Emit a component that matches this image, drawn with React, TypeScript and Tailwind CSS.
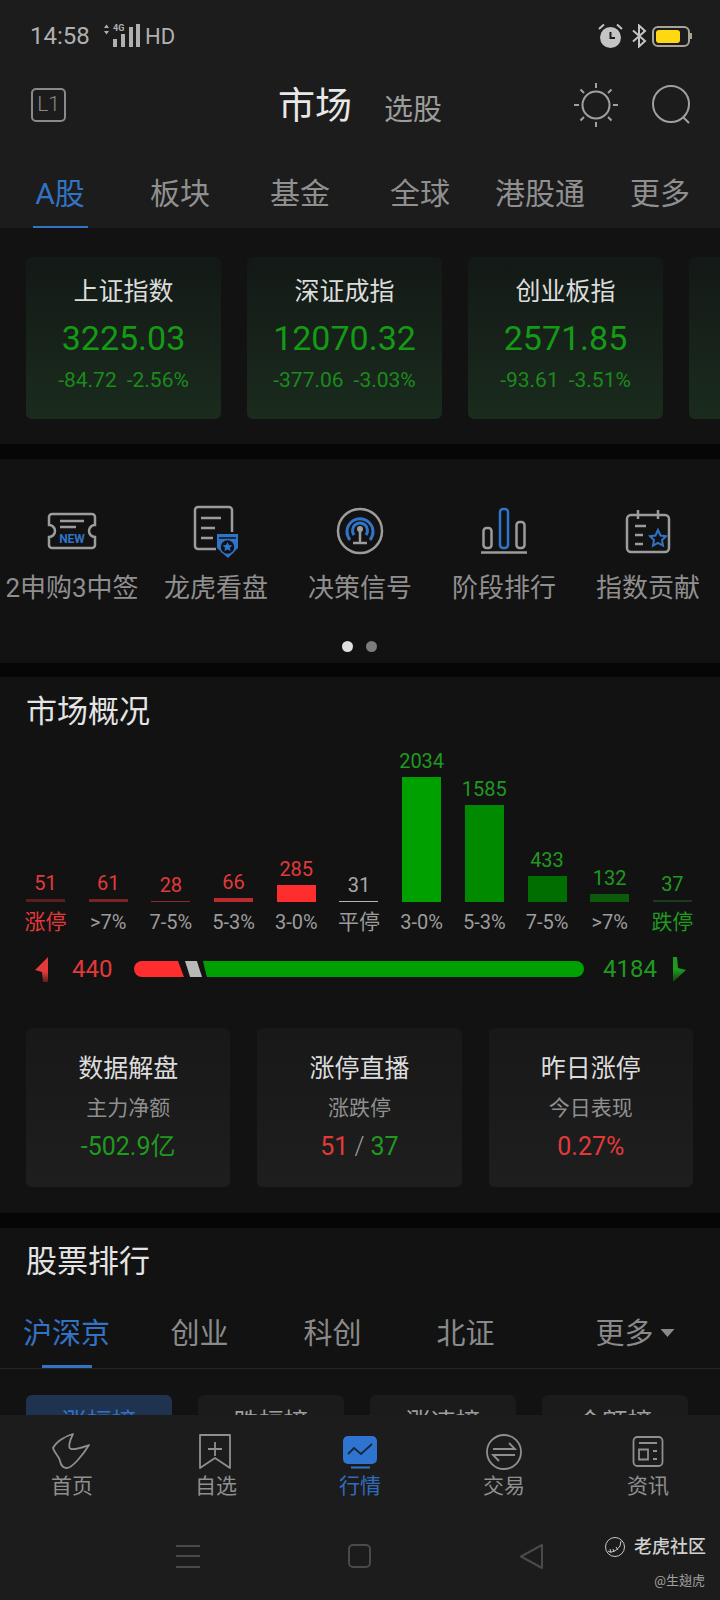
import React from 'react';

const gray = '#9c9c9c';
const blue = '#2f74c8';

const indexCards = [
  { name: '上证指数', value: '3225.03', diff: '-84.72', pct: '-2.56%' },
  { name: '深证成指', value: '12070.32', diff: '-377.06', pct: '-3.03%' },
  { name: '创业板指', value: '2571.85', diff: '-93.61', pct: '-3.51%' },
  { name: '', value: '', diff: '', pct: '' },
];

const bars = [
  { n: '51', label: '涨停', h: 3, bar: 'bg-[#5a1e1e]', text: 'text-[#e23a3a]', labelColor: 'text-[#e23a3a] text-[21px]' },
  { n: '61', label: '>7%', h: 3, bar: 'bg-[#7a2424]', text: 'text-[#e23a3a]', labelColor: 'text-[#9c9c9c] text-[20px]' },
  { n: '28', label: '7-5%', h: 1, bar: 'bg-[#8f2828]', text: 'text-[#e23a3a]', labelColor: 'text-[#9c9c9c] text-[20px]' },
  { n: '66', label: '5-3%', h: 4, bar: 'bg-[#bb2c2c]', text: 'text-[#e23a3a]', labelColor: 'text-[#9c9c9c] text-[20px]' },
  { n: '285', label: '3-0%', h: 17, bar: 'bg-[#ff2e2e]', text: 'text-[#e23a3a]', labelColor: 'text-[#9c9c9c] text-[20px]' },
  { n: '31', label: '平停', h: 1, bar: 'bg-[#b5b5b5]', text: 'text-[#a8a8a8]', labelColor: 'text-[#9c9c9c] text-[21px]' },
  { n: '2034', label: '3-0%', h: 125, bar: 'bg-[#00a000]', text: 'text-[#1f9a1f]', labelColor: 'text-[#9c9c9c] text-[20px]' },
  { n: '1585', label: '5-3%', h: 97, bar: 'bg-[#008a00]', text: 'text-[#1f9a1f]', labelColor: 'text-[#9c9c9c] text-[20px]' },
  { n: '433', label: '7-5%', h: 26, bar: 'bg-[#006e00]', text: 'text-[#1f9a1f]', labelColor: 'text-[#9c9c9c] text-[20px]' },
  { n: '132', label: '>7%', h: 8, bar: 'bg-[#0c5a0c]', text: 'text-[#1f9a1f]', labelColor: 'text-[#9c9c9c] text-[20px]' },
  { n: '37', label: '跌停', h: 2, bar: 'bg-[#1c3a1c]', text: 'text-[#1f9a1f]', labelColor: 'text-[#1f9a1f] text-[21px]' },
];

function TicketIcon() {
  return (
    <svg width="56" height="56" viewBox="0 0 56 56" fill="none">
      <path d="M8 12H48a3 3 0 0 1 3 3V23a6 6 0 0 0 0 12V43a3 3 0 0 1-3 3H8a3 3 0 0 1-3-3V35a6 6 0 0 0 0-12V15a3 3 0 0 1 3-3Z" stroke={gray} strokeWidth="2.5" />
      <path d="M16 19H40M16 25H32" stroke={gray} strokeWidth="2.5" />
      <text x="28" y="41" textAnchor="middle" fontSize="12" fontWeight="700" fill={blue} fontFamily="Roboto">NEW</text>
    </svg>
  );
}

function DocIcon() {
  return (
    <svg width="56" height="56" viewBox="0 0 56 56" fill="none">
      <path d="M28 47H10a3 3 0 0 1-3-3V8a3 3 0 0 1 3-3H41a3 3 0 0 1 3 3V30" stroke={gray} strokeWidth="2.5" />
      <path d="M13 16H33M13 26H27M13 36H25" stroke={gray} strokeWidth="2.5" />
      <path d="M29 32H50V46L40 56L29 46Z" fill={blue} />
      <path d="M31 36H48" stroke="#121212" strokeWidth="1.5" />
      <circle cx="39.500" cy="45" r="7.500" fill="#121212" stroke={blue} strokeWidth="1.5" />
      <path d="M39.500 40l1.500 3 3.300.4-2.400 2.300.6 3.300-3-1.600-3 1.600.6-3.300-2.400-2.300 3.300-.4Z" fill={blue} />
    </svg>
  );
}

function SignalIcon() {
  return (
    <svg width="56" height="56" viewBox="0 0 56 56" fill="none">
      <circle cx="28" cy="29" r="22" stroke={gray} strokeWidth="2.5" />
      <path d="M18 38a13 13 0 1 1 20 0" stroke={blue} strokeWidth="3" />
      <path d="M22 33a7.500 7.500 0 1 1 12 0" stroke={blue} strokeWidth="3" />
      <circle cx="28" cy="27" r="3" fill={gray} />
      <path d="M28 29V41M21 41H35" stroke={gray} strokeWidth="2.5" />
    </svg>
  );
}

function BarsIcon() {
  return (
    <svg width="56" height="56" viewBox="0 0 56 56" fill="none">
      <rect x="7.5" y="26" width="8" height="20" rx="3" stroke={gray} strokeWidth="2.5" />
      <rect x="24" y="7" width="8" height="39" rx="3" stroke={blue} strokeWidth="2.5" />
      <rect x="40.5" y="20" width="8" height="26" rx="3" stroke={gray} strokeWidth="2.5" />
      <path d="M5 50.5H51" stroke={gray} strokeWidth="2.5" />
    </svg>
  );
}

function CalendarIcon() {
  return (
    <svg width="56" height="56" viewBox="0 0 56 56" fill="none">
      <rect x="7" y="13" width="42" height="37" rx="4" stroke={gray} strokeWidth="2.5" />
      <path d="M18 8V17M38 8V17" stroke={gray} strokeWidth="2.5" />
      <path d="M15 24H26M15 33H23M15 42H23" stroke={gray} strokeWidth="2.5" />
      <path d="M38 28l2.500 5.500 5.500.7-4 3.900 1 5.600-5-2.800-5 2.800 1-5.600-4-3.900 5.500-.7Z" stroke={blue} strokeWidth="2" />
    </svg>
  );
}

const shortcuts = [
  { label: '2申购3中签', icon: <TicketIcon /> },
  { label: '龙虎看盘', icon: <DocIcon /> },
  { label: '决策信号', icon: <SignalIcon /> },
  { label: '阶段排行', icon: <BarsIcon /> },
  { label: '指数贡献', icon: <CalendarIcon /> },
];

function NavIcon({ name }: { name: string }) {
  if (name === 'home') {
    return (
      <svg width="44" height="44" viewBox="0 0 44 44" fill="none">
        <path d="M23 6C15 8 6 14 3 20C5 26 9 28 10 33C11 38 13 40 17 40C22 40 33 27 39 17C33 19 26 22 21 21C18 20 19 14 23 6Z" stroke="#8f8f8f" strokeWidth="1.8" strokeLinejoin="round" />
      </svg>
    );
  }
  if (name === 'star') {
    return (
      <svg width="44" height="44" viewBox="0 0 44 44" fill="none">
        <path d="M6 7H36V40L21 30L6 40Z" stroke="#8f8f8f" strokeWidth="1.8" strokeLinejoin="round" />
        <path d="M21 14V28M14 21H28" stroke="#8f8f8f" strokeWidth="1.8" />
      </svg>
    );
  }
  if (name === 'market') {
    return (
      <svg width="44" height="44" viewBox="0 0 44 44" fill="none">
        <rect x="5" y="8" width="34" height="28" rx="5" fill="#2f74d0" />
        <path d="M10 26L16 20L23 26L34 16" stroke="#16263c" strokeWidth="1.8" />
        <path d="M13 39.5H32" stroke="#2f74d0" strokeWidth="2" />
      </svg>
    );
  }
  if (name === 'trade') {
    return (
      <svg width="44" height="44" viewBox="0 0 44 44" fill="none">
        <circle cx="22" cy="24" r="17" stroke="#8f8f8f" strokeWidth="1.8" />
        <path d="M11 21H33L27 15M33 27H11L17 33" stroke="#8f8f8f" strokeWidth="1.8" />
      </svg>
    );
  }
  return (
    <svg width="44" height="44" viewBox="0 0 44 44" fill="none">
      <rect x="7.5" y="9" width="29" height="29" rx="4" stroke="#8f8f8f" strokeWidth="1.8" />
      <path d="M13 15H31M13 21.5H22V31.5H13ZM27 23H31M27 31H31" stroke="#8f8f8f" strokeWidth="1.8" />
    </svg>
  );
}

const navItems = [
  { label: '首页', icon: 'home' },
  { label: '自选', icon: 'star' },
  { label: '行情', icon: 'market', active: true },
  { label: '交易', icon: 'trade' },
  { label: '资讯', icon: 'news' },
];

export default function App() {
  return (
    <div className="w-[720px] h-[1600px] flex flex-col overflow-hidden bg-[#060606] font-['Roboto','Noto_Sans_CJK_SC',sans-serif]">
      <div className="flex-1 min-h-0 overflow-hidden">
        {/* top bar */}
        <div className="bg-[#1c1c1c]">
          <div className="h-[72px] flex items-center pl-[30px] pr-[28px] text-[#b0b0b0]">
            <span className="text-[24px] w-[71px]">14:58</span>
            <svg width="42" height="26" viewBox="0 0 42 26" fill="#b0b0b0">
              <path d="M3 5L5.500 1.500L8 5ZM3 8L5.500 11.500L8 8Z" />
              <text x="12" y="8" fontSize="9" fontWeight="700" fontFamily="Roboto">4G</text>
              <rect x="12" y="16" width="4" height="8" />
              <rect x="20" y="11" width="4" height="13" />
              <rect x="28" y="4" width="4" height="20" />
              <rect x="35" y="1" width="4" height="23" />
            </svg>
            <span className="text-[22px] ml-[2px]">HD</span>
            <div className="ml-auto flex items-center gap-[8px]">
              <svg width="25" height="26" viewBox="0 0 25 26" fill="none">
                <circle cx="12.500" cy="14.500" r="10.500" fill="#c4c4c4" />
                <path d="M12.500 9V15H17" stroke="#1c1c1c" strokeWidth="2" />
                <path d="M1 6L6 1.500M24 6L19 1.500" stroke="#c4c4c4" strokeWidth="2" />
              </svg>
              <svg width="16" height="24" viewBox="0 0 16 24" fill="none">
                <path d="M2 6.500L14 17L8 22.500V1.500L14 7L2 17.500" stroke="#c4c4c4" strokeWidth="2" />
              </svg>
              <div className="ml-[-3px] flex items-center">
                <div className="w-[38px] h-[21px] border-2 border-[#a8a498] rounded-[6px] p-[2px]">
                  <div className="w-[24px] h-full bg-[#ffd814] rounded-[3px]" />
                </div>
                <div className="w-[2px] h-[6px] bg-[#a8a498]" />
              </div>
            </div>
          </div>
          <div className="h-[66px] flex items-center pl-[31px] pr-[28px]">
            <div className="w-[35px] h-[34px] border-2 border-[#8a8a8a] rounded-[5px] flex items-center justify-center text-[#8a8a8a] text-[21px] font-light">L1</div>
            <span className="ml-[212px] mt-[3px] text-[37px] text-[#e8e8e8] w-[74px] leading-[48px]">市场</span>
            <span className="ml-[32px] mt-[9px] text-[29px] text-[#9c9c9c] leading-[40px]">选股</span>
            <svg className="ml-auto" width="48" height="48" viewBox="0 0 48 48" fill="none" stroke="#a0a0a0" strokeWidth="2">
              <circle cx="24" cy="24" r="13.500" />
              <path d="M24 2V7M24 41V46M2 24H7M41 24H46M8.500 8.500L12 12M36 36L39.500 39.500M39.500 8.500L36 12M12 36L8.500 39.500" />
            </svg>
            <svg className="ml-[30px] mr-[-2px]" width="44" height="44" viewBox="0 0 44 44" fill="none" stroke="#a0a0a0" strokeWidth="2">
              <circle cx="21" cy="21" r="18" />
              <path d="M33 34L39 40" />
            </svg>
          </div>
          <div className="h-[90px] flex">
            {['A股', '板块', '基金', '全球', '港股通', '更多'].map((t, i) => (
              <div key={t} className="w-[120px] flex flex-col items-center justify-end">
                <span className={`text-[30px] leading-[38px] ${i === 0 ? 'text-[#3273c4]' : 'text-[#909090]'}`}>{t}</span>
                <div className={`w-[55px] h-[2px] mt-[13px] ${i === 0 ? 'bg-[#3273c4]' : ''}`} />
              </div>
            ))}
          </div>
        </div>

        {/* index cards */}
        <div className="h-[216px] bg-[#121212] pt-[29px] pl-[26px] flex gap-[26px] overflow-hidden">
          {indexCards.map((c, i) => (
            <div key={i} className="w-[195px] h-[162px] shrink-0 rounded-[6px] bg-gradient-to-b from-[#131916] to-[#1a2b1d] flex flex-col items-center pt-[18px]">
              {c.name && (
                <>
                  <span className="text-[25px] leading-[34px] text-[#dcdcdc]">{c.name}</span>
                  <span className="text-[34px] leading-[40px] mt-[9px] text-[#149a14]">{c.value}</span>
                  <div className="flex gap-[10px] text-[21px] leading-[28px] mt-[8px] text-[#1c8a1c]">
                    <span>{c.diff}</span>
                    <span>{c.pct}</span>
                  </div>
                </>
              )}
            </div>
          ))}
        </div>

        {/* shortcuts */}
        <div className="mt-[15px] h-[204px] bg-[#121212] pt-[43px]">
          <div className="flex">
            {shortcuts.map(s => (
              <div key={s.label} className="w-[144px] flex flex-col items-center">
                {s.icon}
                <span className="mt-[13px] text-[26px] leading-[34px] text-[#8f8f8f] whitespace-nowrap">{s.label}</span>
              </div>
            ))}
          </div>
          <div className="mt-[36px] flex justify-center gap-[13px] pr-[2px]">
            <div className="w-[11px] h-[11px] rounded-full bg-[#e0e0e0]" />
            <div className="w-[11px] h-[11px] rounded-full bg-[#7c7c7c]" />
          </div>
        </div>

        {/* market overview */}
        <div className="mt-[14px] h-[536px] bg-[#121212] pt-[15px]">
          <div className="pl-[26px] text-[31px] leading-[40px] text-[#e4e4e4]">市场概况</div>
          <div className="pl-[26px] pr-[28px] flex justify-between">
            {bars.map((b, i) => (
              <div key={i} className="w-[39px] flex flex-col items-center">
                <div className="h-[170px] flex flex-col justify-end items-center w-full">
                  <span className={`text-[20px] leading-[24px] mb-[4px] ${b.text}`}>{b.n}</span>
                  <div className={`w-full ${b.bar}`} style={{ height: b.h }} />
                </div>
                <span className={`mt-[6px] leading-[28px] whitespace-nowrap ${b.labelColor}`}>{b.label}</span>
              </div>
            ))}
          </div>
          <div className="mt-[21px] h-[24px] flex items-center pl-[35px]">
            <svg width="14" height="25" viewBox="0 0 14 25">
              <defs>
                <linearGradient id="upArrow" x1="0" y1="0" x2="0" y2="1">
                  <stop offset="0.6" stopColor="#e23a3a" />
                  <stop offset="1" stopColor="#5a1e1e" />
                </linearGradient>
              </defs>
              <path d="M13 0V25H8L7 15L0 13Z" fill="url(#upArrow)" />
            </svg>
            <span className="ml-[23px] w-[62px] text-[24px] text-[#e23a3a]">440</span>
            <div className="w-[50px] h-[16px] bg-[#ff2e2e] rounded-l-full [clip-path:polygon(0_0,88%_0,100%_100%,0_100%)]" />
            <div className="ml-[1px] w-[17px] h-[16px] bg-[#b8b8b8] [clip-path:polygon(0_0,70%_0,100%_100%,30%_100%)]" />
            <div className="ml-[1px] w-[381px] h-[16px] bg-[#00a000] rounded-r-full [clip-path:polygon(0_0,100%_0,100%_100%,1%_100%)]" />
            <span className="ml-[19px] w-[69px] text-[24px] text-[#1f9a1f]">4184</span>
            <svg width="14" height="25" viewBox="0 0 14 25">
              <defs>
                <linearGradient id="downArrow" x1="0" y1="0" x2="0" y2="1">
                  <stop offset="0.5" stopColor="#1f9a1f" />
                  <stop offset="1" stopColor="#123c12" />
                </linearGradient>
              </defs>
              <path d="M1 0H5L6 11L14 13L1 25Z" fill="url(#downArrow)" />
            </svg>
          </div>
          <div className="mt-[47px] pl-[26px] pr-[27px] grid grid-cols-3 gap-[27px]">
            <div className="h-[159px] rounded-[6px] bg-gradient-to-b from-[#181818] to-[#1e1e1e] flex flex-col items-center pt-[24px]">
              <span className="text-[25px] leading-[34px] text-[#dcdcdc]">数据解盘</span>
              <span className="mt-[7px] text-[21px] leading-[30px] text-[#8f8f8f]">主力净额</span>
              <span className="mt-[7px] text-[25px] leading-[34px] text-[#1f9a1f]">-502.9亿</span>
            </div>
            <div className="h-[159px] rounded-[6px] bg-gradient-to-b from-[#181818] to-[#1e1e1e] flex flex-col items-center pt-[24px]">
              <span className="text-[25px] leading-[34px] text-[#dcdcdc]">涨停直播</span>
              <span className="mt-[7px] text-[21px] leading-[30px] text-[#8f8f8f]">涨跌停</span>
              <span className="mt-[7px] text-[25px] leading-[34px]">
                <span className="text-[#e23a3a]">51</span>
                <span className="text-[#9c9c9c] font-light"> / </span>
                <span className="text-[#1f9a1f]">37</span>
              </span>
            </div>
            <div className="h-[159px] rounded-[6px] bg-gradient-to-b from-[#181818] to-[#1e1e1e] flex flex-col items-center pt-[24px]">
              <span className="text-[25px] leading-[34px] text-[#dcdcdc]">昨日涨停</span>
              <span className="mt-[7px] text-[21px] leading-[30px] text-[#8f8f8f]">今日表现</span>
              <span className="mt-[7px] text-[25px] leading-[34px] text-[#e23a3a]">0.27%</span>
            </div>
          </div>
        </div>

        {/* stock ranking */}
        <div className="mt-[15px] bg-[#121212] pt-[14px] h-[300px]">
          <div className="pl-[26px] text-[31px] leading-[40px] text-[#e4e4e4]">股票排行</div>
          <div className="h-[87px] flex border-b border-[#262626]">
            {['沪深京', '创业', '科创', '北证'].map((t, i) => (
              <div key={t} className="w-[133px] flex flex-col items-center pt-[33px]">
                <span className={`text-[29px] leading-[38px] ${i === 0 ? 'text-[#3273c4]' : 'text-[#8a8a8a]'}`}>{t}</span>
                {i === 0 && <div className="w-[50px] h-[3px] mt-[12px] bg-[#3273c4]" />}
              </div>
            ))}
            <div className="flex-1 flex items-start justify-center pl-[18px] pt-[33px]">
              <span className="text-[29px] leading-[38px] text-[#8a8a8a]">更多</span>
              <div className="ml-[7px] mt-[14px] w-[14px] h-[8px] bg-[#8a8a8a] [clip-path:polygon(0_0,100%_0,50%_100%)]" />
            </div>
          </div>
          <div className="mt-[26px] pl-[26px] pr-[32px] flex justify-between">
            {['涨幅榜', '跌幅榜', '涨速榜', '金额榜'].map((t, i) => (
              <div key={t} className={`w-[146px] h-[56px] rounded-[6px] flex items-center justify-center text-[25px] ${i === 0 ? 'bg-[#1f3350] text-[#3273c4]' : 'bg-[#1b1b1b] text-[#a0a0a0]'}`}>{t}</div>
            ))}
          </div>
        </div>
      </div>

      {/* bottom nav */}
      <div className="h-[185px] shrink-0 bg-[#1c1c1c]">
        <div className="flex pt-[13px]">
          {navItems.map(n => (
            <div key={n.label} className="w-[144px] flex flex-col items-center">
              <NavIcon name={n.icon} />
              <span className={`text-[21px] leading-[28px] ${n.active ? 'text-[#2f6cbc]' : 'text-[#8f8f8f]'}`}>{n.label}</span>
            </div>
          ))}
        </div>
        <div className="relative mt-[32px] h-[48px] flex items-center pl-[176px]">
          <div className="w-[24px] h-[23px] flex flex-col justify-between">
            <div className="h-[2px] bg-[#4a4a4a]" />
            <div className="h-[2px] bg-[#4a4a4a]" />
            <div className="h-[2px] bg-[#4a4a4a]" />
          </div>
          <div className="ml-[148px] w-[23px] h-[24px] rounded-[5px] border-2 border-[#4a4a4a]" />
          <svg className="ml-[148px]" width="25" height="27" viewBox="0 0 25 27" fill="none">
            <path d="M23 2V25L2 13.500Z" stroke="#4a4a4a" strokeWidth="2" strokeLinejoin="round" />
          </svg>
          <div className="absolute left-[605px] top-[3px] flex items-center gap-[9px]">
            <svg width="20" height="20" viewBox="0 0 20 20" fill="none" stroke="#c8c8c8" strokeWidth="1">
              <circle cx="10" cy="10" r="9.500" />
              <path d="M3 14C5 16 11 15 15 9M15 9L16 4M5 12L6 16M8 12L9 15M11 10L13 13" />
            </svg>
            <span className="text-[18px] leading-[24px] font-medium text-[#d0d0d0]">老虎社区</span>
          </div>
          <span className="absolute right-[15px] top-[40px] text-[13px] leading-[18px] text-[#a0a0a0]">@生翅虎</span>
        </div>
      </div>
    </div>
  );
}
